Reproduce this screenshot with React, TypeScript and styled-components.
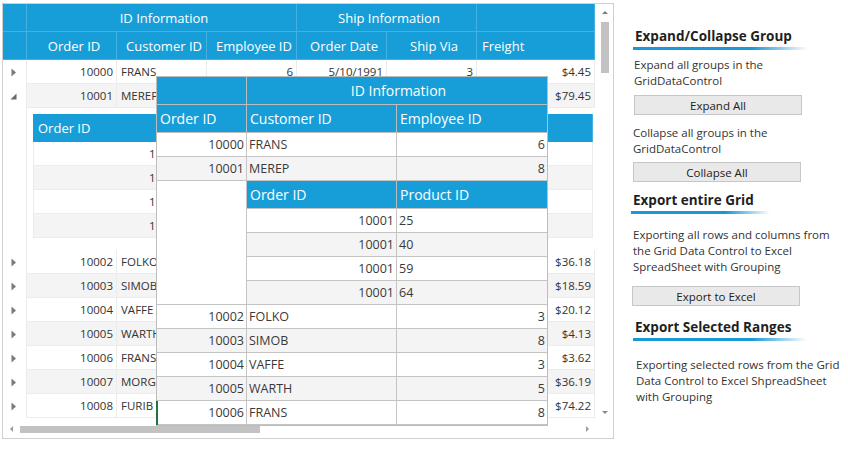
import React from 'react';
import styled, { createGlobalStyle } from 'styled-components';

const BLUE = '#179ed9';
const FONT = '"Open Sans", "Noto Sans", sans-serif';

const GlobalStyle = createGlobalStyle`
  html, body { margin: 0; padding: 0; background: #fff; }
  body { font-family: ${FONT}; color: #333; }
  * { box-sizing: border-box; }
`;

const Page = styled.div`
  position: relative;
  width: 848px;
  height: 450px;
  display: flex;
  align-items: flex-start;
  overflow: hidden;
`;

/* ---------- main grid ---------- */

const GridFrame = styled.div`
  margin: 3px 0 0 2px;
  width: 612px;
  height: 436px;
  border: 1px solid #d0d0d0;
  display: grid;
  grid-template-columns: 592px 18px;
  grid-template-rows: 416px 18px;
  background: #fff;
`;

const Viewport = styled.div`
  overflow: hidden;
  display: flex;
  flex-direction: column;
`;

const MAIN_COLS = '24px 90px 90px 90px 90px 90px 118px';

const HeaderRow = styled.div<{ $cols: string }>`
  display: grid;
  grid-template-columns: ${p => p.$cols};
  height: 28px;
  flex: none;
  background: ${BLUE};
  border-bottom: 1px solid rgba(255, 255, 255, 0.2);
`;

const HeaderCell = styled.div<{ $align?: 'left' | 'center' }>`
  display: flex;
  align-items: center;
  justify-content: ${p => (p.$align === 'left' ? 'flex-start' : 'center')};
  padding: 0 0 0 5px;
  border-right: 1px solid rgba(255, 255, 255, 0.2);
  color: #fff;
  font-size: 13px;
  white-space: nowrap;
  overflow: hidden;
`;

const DataRow = styled.div<{ $cols: string; $alt?: boolean }>`
  display: grid;
  grid-template-columns: ${p => p.$cols};
  height: 24px;
  flex: none;
  background: ${p => (p.$alt ? '#f4f4f4' : '#fff')};
`;

const IndentCell = styled.div`
  background: #fff;
  border-right: 1px solid #ececec;
  display: flex;
  align-items: center;
  justify-content: center;
  padding-right: 2px;
`;

const DataCell = styled.div<{ $align?: 'left' | 'right' }>`
  display: flex;
  align-items: center;
  justify-content: ${p => (p.$align === 'right' ? 'flex-end' : 'flex-start')};
  padding: 0 3px 0 4px;
  border-right: 1px solid #ececec;
  border-bottom: 1px solid #ececec;
  font-size: 11.5px;
  color: #333;
  white-space: nowrap;
  overflow: hidden;
`;

const DetailRow = styled.div`
  display: grid;
  grid-template-columns: 24px 1fr;
  height: 142px;
  flex: none;
`;

const DetailBody = styled.div`
  padding: 6px 2px 0 6px;
  background: #fff;
`;

const INNER_COLS = '152px 1fr';

const InnerHeader = styled.div`
  display: grid;
  grid-template-columns: ${INNER_COLS};
  height: 28px;
  background: ${BLUE};
`;

const InnerHeaderCell = styled.div`
  display: flex;
  align-items: center;
  padding-left: 5px;
  color: #fff;
  font-size: 13px;
  border-right: 1px solid rgba(255, 255, 255, 0.2);
`;

const InnerRow = styled.div<{ $alt?: boolean }>`
  display: grid;
  grid-template-columns: ${INNER_COLS};
  height: 24px;
  background: ${p => (p.$alt ? '#f4f4f4' : '#fff')};
  border-left: 1px solid #ececec;
`;

/* ---------- scrollbars ---------- */

const VScroll = styled.div`
  display: flex;
  flex-direction: column;
  align-items: center;
  padding: 7px 0 6px 1px;
  background: #fff;
`;

const HScroll = styled.div`
  display: flex;
  align-items: center;
  padding: 0 6px 0 7px;
  background: #fff;
`;

const Corner = styled.div`
  background: #fff;
`;

const Arrow = styled.span<{ $dir: 'up' | 'down' | 'left' | 'right' }>`
  width: 0;
  height: 0;
  flex: none;
  border-style: solid;
  border-color: transparent;
  ${p =>
    p.$dir === 'up'
      ? 'border-width: 0 3px 3px 3px; border-bottom-color: #7d7d7d;'
      : p.$dir === 'down'
      ? 'border-width: 3px 3px 0 3px; border-top-color: #8a8a8a;'
      : p.$dir === 'left'
      ? 'border-width: 3px 3px 3px 0; border-right-color: #9a9a9a;'
      : 'border-width: 3px 0 3px 3px; border-left-color: #9a9a9a;'}
`;

const VThumb = styled.div`
  width: 8px;
  height: 51px;
  margin-top: 8px;
  background: #c2c2c2;
`;

const HThumb = styled.div`
  width: 240px;
  height: 7px;
  margin-left: 7px;
  background: #c2c2c2;
`;

const Spacer = styled.div`
  flex: 1;
`;

/* ---------- dragged overlay ---------- */

const OV_COLS = '90px 150px 150px';

const Overlay = styled.div`
  position: absolute;
  left: 156px;
  top: 76px;
  width: 392px;
  border: 1px solid #bdbdbd;
  background: #fff;
  display: flex;
  flex-direction: column;
`;

const OvHeaderRow = styled.div`
  display: grid;
  grid-template-columns: ${OV_COLS};
  height: 28px;
  background: ${BLUE};
  border-bottom: 1px solid #bdbdbd;
`;

const OvHeaderCell = styled.div<{ $span?: number; $center?: boolean }>`
  grid-column: span ${p => p.$span ?? 1};
  display: flex;
  align-items: center;
  justify-content: ${p => (p.$center ? 'center' : 'flex-start')};
  padding-left: 3px;
  color: #fff;
  font-size: 14px;
  white-space: nowrap;
  border-right: 1px solid #bdbdbd;
  &:last-child { border-right: none; }
`;

const OvRow = styled.div<{ $alt?: boolean; $marked?: boolean }>`
  position: relative;
  display: grid;
  grid-template-columns: ${OV_COLS};
  height: 24px;
  background: ${p => (p.$alt ? '#f4f4f4' : '#fff')};
  border-bottom: 1px solid #c4c4c4;
  ${p =>
    p.$marked
      ? `&::before { content: ''; position: absolute; left: -1px; top: 0; bottom: -1px; width: 2px; background: #217346; }`
      : ''}
`;

const OvCell = styled.div<{ $align?: 'left' | 'right' }>`
  display: flex;
  align-items: center;
  justify-content: ${p => (p.$align === 'right' ? 'flex-end' : 'flex-start')};
  padding: 0 2px 0 2px;
  font-size: 12.5px;
  color: #3a3a3a;
  white-space: nowrap;
  border-right: 1px solid #c4c4c4;
  &:last-child { border-right: none; }
`;

const OvNested = styled.div`
  display: grid;
  grid-template-columns: 90px 300px;
  border-bottom: 1px solid #c4c4c4;
`;

const OvBlank = styled.div`
  background: #fff;
  border-right: 1px solid #c4c4c4;
`;

const OvNestedGrid = styled.div`
  display: flex;
  flex-direction: column;
`;

const OvNestedHeader = styled.div`
  display: grid;
  grid-template-columns: 150px 150px;
  height: 28px;
  background: ${BLUE};
  border-bottom: 1px solid #c4c4c4;
`;

const OvNestedRow = styled.div<{ $alt?: boolean; $last?: boolean }>`
  display: grid;
  grid-template-columns: 150px 150px;
  height: ${p => (p.$last ? 23 : 24)}px;
  background: ${p => (p.$alt ? '#f4f4f4' : '#fff')};
  border-bottom: ${p => (p.$last ? 'none' : '1px solid #c4c4c4')};
`;

/* ---------- side panel ---------- */

const SidePanel = styled.div`
  flex: 1;
  display: flex;
  flex-direction: column;
  align-items: flex-start;
  padding-left: 19px;
`;

const SectionTitle = styled.div<{ $mt: number; $dx?: number }>`
  margin-top: ${p => p.$mt}px;
  margin-left: ${p => p.$dx ?? 0}px;
  padding: 0 16px 5px 2px;
  font-weight: 700;
  font-size: 13.5px;
  line-height: 18px;
  color: #1f1f1f;
  white-space: nowrap;
  background: linear-gradient(to right, #1a98d5 0%, #1a98d5 68%, rgba(26, 152, 213, 0) 100%) no-repeat left bottom / 100% 3px;
`;

const Desc = styled.div<{ $mt: number; $dx?: number }>`
  margin-top: ${p => p.$mt}px;
  margin-left: ${p => p.$dx ?? 0}px;
  font-size: 11.5px;
  line-height: 16px;
  color: #333;
  width: 210px;
`;

const ActionButton = styled.button<{ $mt: number; $dx?: number }>`
  margin-top: ${p => p.$mt}px;
  margin-left: ${p => p.$dx ?? 0}px;
  width: 168px;
  height: 20px;
  padding: 0;
  border: 1px solid #c6c6c6;
  background: #e9e9e9;
  font-family: ${FONT};
  font-size: 11.5px;
  color: #222;
  display: flex;
  align-items: center;
  justify-content: center;
`;

/* ---------- data ---------- */

type Order = {
  id: number;
  cust: string;
  emp: number;
  date: string;
  via: number;
  freight: string;
  expanded?: boolean;
};

const orders: Order[] = [
  { id: 10000, cust: 'FRANS', emp: 6, date: '5/10/1991', via: 3, freight: '$4.45' },
  { id: 10001, cust: 'MEREP', emp: 8, date: '6/15/1992', via: 1, freight: '$79.45', expanded: true },
  { id: 10002, cust: 'FOLKO', emp: 3, date: '7/11/1991', via: 2, freight: '$36.18' },
  { id: 10003, cust: 'SIMOB', emp: 8, date: '8/14/1993', via: 3, freight: '$18.59' },
  { id: 10004, cust: 'VAFFE', emp: 3, date: '3/21/1992', via: 1, freight: '$20.12' },
  { id: 10005, cust: 'WARTH', emp: 5, date: '9/02/1991', via: 2, freight: '$4.13' },
  { id: 10006, cust: 'FRANS', emp: 8, date: '1/18/1993', via: 3, freight: '$3.62' },
  { id: 10007, cust: 'MORGK', emp: 4, date: '4/25/1992', via: 1, freight: '$36.19' },
  { id: 10008, cust: 'FURIB', emp: 2, date: '2/07/1991', via: 2, freight: '$74.22' },
];

const products = [25, 40, 59, 64];

const CollapsedIcon = () => (
  <svg width="6" height="9" viewBox="0 0 6 9">
    <path d="M0.5 0.5 L5 4.5 L0.5 8.5 Z" fill="#7a7a7a" />
  </svg>
);

const ExpandedIcon = () => (
  <svg width="7" height="7" viewBox="0 0 7 7">
    <path d="M6.5 0.5 L6.5 6.5 L0.5 6.5 Z" fill="#6a6a6a" />
  </svg>
);

const MainRow = ({ o, alt }: { o: Order; alt: boolean }) => (
  <DataRow $cols={MAIN_COLS} $alt={alt}>
    <IndentCell>{o.expanded ? <ExpandedIcon /> : <CollapsedIcon />}</IndentCell>
    <DataCell $align="right">{o.id}</DataCell>
    <DataCell>{o.cust}</DataCell>
    <DataCell $align="right">{o.emp}</DataCell>
    <DataCell $align="right">{o.date}</DataCell>
    <DataCell $align="right">{o.via}</DataCell>
    <DataCell $align="right">{o.freight}</DataCell>
  </DataRow>
);

export default function App() {
  const before = orders.slice(0, 2);
  const after = orders.slice(2);
  const ovAfter = orders.slice(2, 7);
  return (
    <>
      <GlobalStyle />
      <Page>
        <GridFrame>
          <Viewport>
            <HeaderRow $cols="24px 270px 180px 118px">
              <HeaderCell />
              <HeaderCell>ID Information</HeaderCell>
              <HeaderCell>Ship Information</HeaderCell>
              <HeaderCell />
            </HeaderRow>
            <HeaderRow $cols={MAIN_COLS}>
              <HeaderCell />
              <HeaderCell>Order ID</HeaderCell>
              <HeaderCell>Customer ID</HeaderCell>
              <HeaderCell>Employee ID</HeaderCell>
              <HeaderCell>Order Date</HeaderCell>
              <HeaderCell>Ship Via</HeaderCell>
              <HeaderCell $align="left">Freight</HeaderCell>
            </HeaderRow>
            {before.map((o, i) => (
              <MainRow key={o.id} o={o} alt={i % 2 === 1} />
            ))}
            <DetailRow>
              <IndentCell />
              <DetailBody>
                <InnerHeader>
                  <InnerHeaderCell>Order ID</InnerHeaderCell>
                  <InnerHeaderCell>Product ID</InnerHeaderCell>
                </InnerHeader>
                {products.map((p, i) => (
                  <InnerRow key={p} $alt={i % 2 === 1}>
                    <DataCell $align="right">10001</DataCell>
                    <DataCell>{p}</DataCell>
                  </InnerRow>
                ))}
              </DetailBody>
            </DetailRow>
            {after.map((o, i) => (
              <MainRow key={o.id} o={o} alt={i % 2 === 1} />
            ))}
          </Viewport>
          <VScroll>
            <Arrow $dir="up" />
            <VThumb />
            <Spacer />
            <Arrow $dir="down" />
          </VScroll>
          <HScroll>
            <Arrow $dir="left" />
            <HThumb />
            <Spacer />
            <Arrow $dir="right" />
          </HScroll>
          <Corner />
        </GridFrame>

        <SidePanel>
          <SectionTitle $mt={27}>Expand/Collapse Group</SectionTitle>
          <Desc $mt={7} $dx={1}>
            Expand all groups in the
            <br />
            GridDataControl
          </Desc>
          <ActionButton $mt={6} $dx={1}>Expand All</ActionButton>
          <Desc $mt={10}>
            Collapse all groups in the
            <br />
            GridDataControl
          </Desc>
          <ActionButton $mt={5}>Collapse All</ActionButton>
          <SectionTitle $mt={9} $dx={-2}>Export entire Grid</SectionTitle>
          <Desc $mt={13}>
            Exporting all rows and columns from
            <br />
            the Grid Data Control to Excel
            <br />
            SpreadSheet with Grouping
          </Desc>
          <ActionButton $mt={11} $dx={-1}>Export to Excel</ActionButton>
          <SectionTitle $mt={12}>Export Selected Ranges</SectionTitle>
          <Desc $mt={16} $dx={3}>
            Exporting selected rows from the Grid
            <br />
            Data Control to Excel ShpreadSheet
            <br />
            with Grouping
          </Desc>
        </SidePanel>

        <Overlay>
          <OvHeaderRow>
            <OvHeaderCell />
            <OvHeaderCell $span={2} $center>ID Information</OvHeaderCell>
          </OvHeaderRow>
          <OvHeaderRow>
            <OvHeaderCell>Order ID</OvHeaderCell>
            <OvHeaderCell>Customer ID</OvHeaderCell>
            <OvHeaderCell>Employee ID</OvHeaderCell>
          </OvHeaderRow>
          {before.map((o, i) => (
            <OvRow key={o.id} $alt={i % 2 === 1}>
              <OvCell $align="right">{o.id}</OvCell>
              <OvCell>{o.cust}</OvCell>
              <OvCell $align="right">{o.emp}</OvCell>
            </OvRow>
          ))}
          <OvNested>
            <OvBlank />
            <OvNestedGrid>
              <OvNestedHeader>
                <OvHeaderCell>Order ID</OvHeaderCell>
                <OvHeaderCell>Product ID</OvHeaderCell>
              </OvNestedHeader>
              {products.map((p, i) => (
                <OvNestedRow key={p} $alt={i % 2 === 1} $last={i === products.length - 1}>
                  <OvCell $align="right">10001</OvCell>
                  <OvCell>{p}</OvCell>
                </OvNestedRow>
              ))}
            </OvNestedGrid>
          </OvNested>
          {ovAfter.map((o, i) => (
            <OvRow key={o.id} $alt={i % 2 === 1} $marked={i === ovAfter.length - 1}>
              <OvCell $align="right">{o.id}</OvCell>
              <OvCell>{o.cust}</OvCell>
              <OvCell $align="right">{o.emp}</OvCell>
            </OvRow>
          ))}
        </Overlay>
      </Page>
    </>
  );
}
